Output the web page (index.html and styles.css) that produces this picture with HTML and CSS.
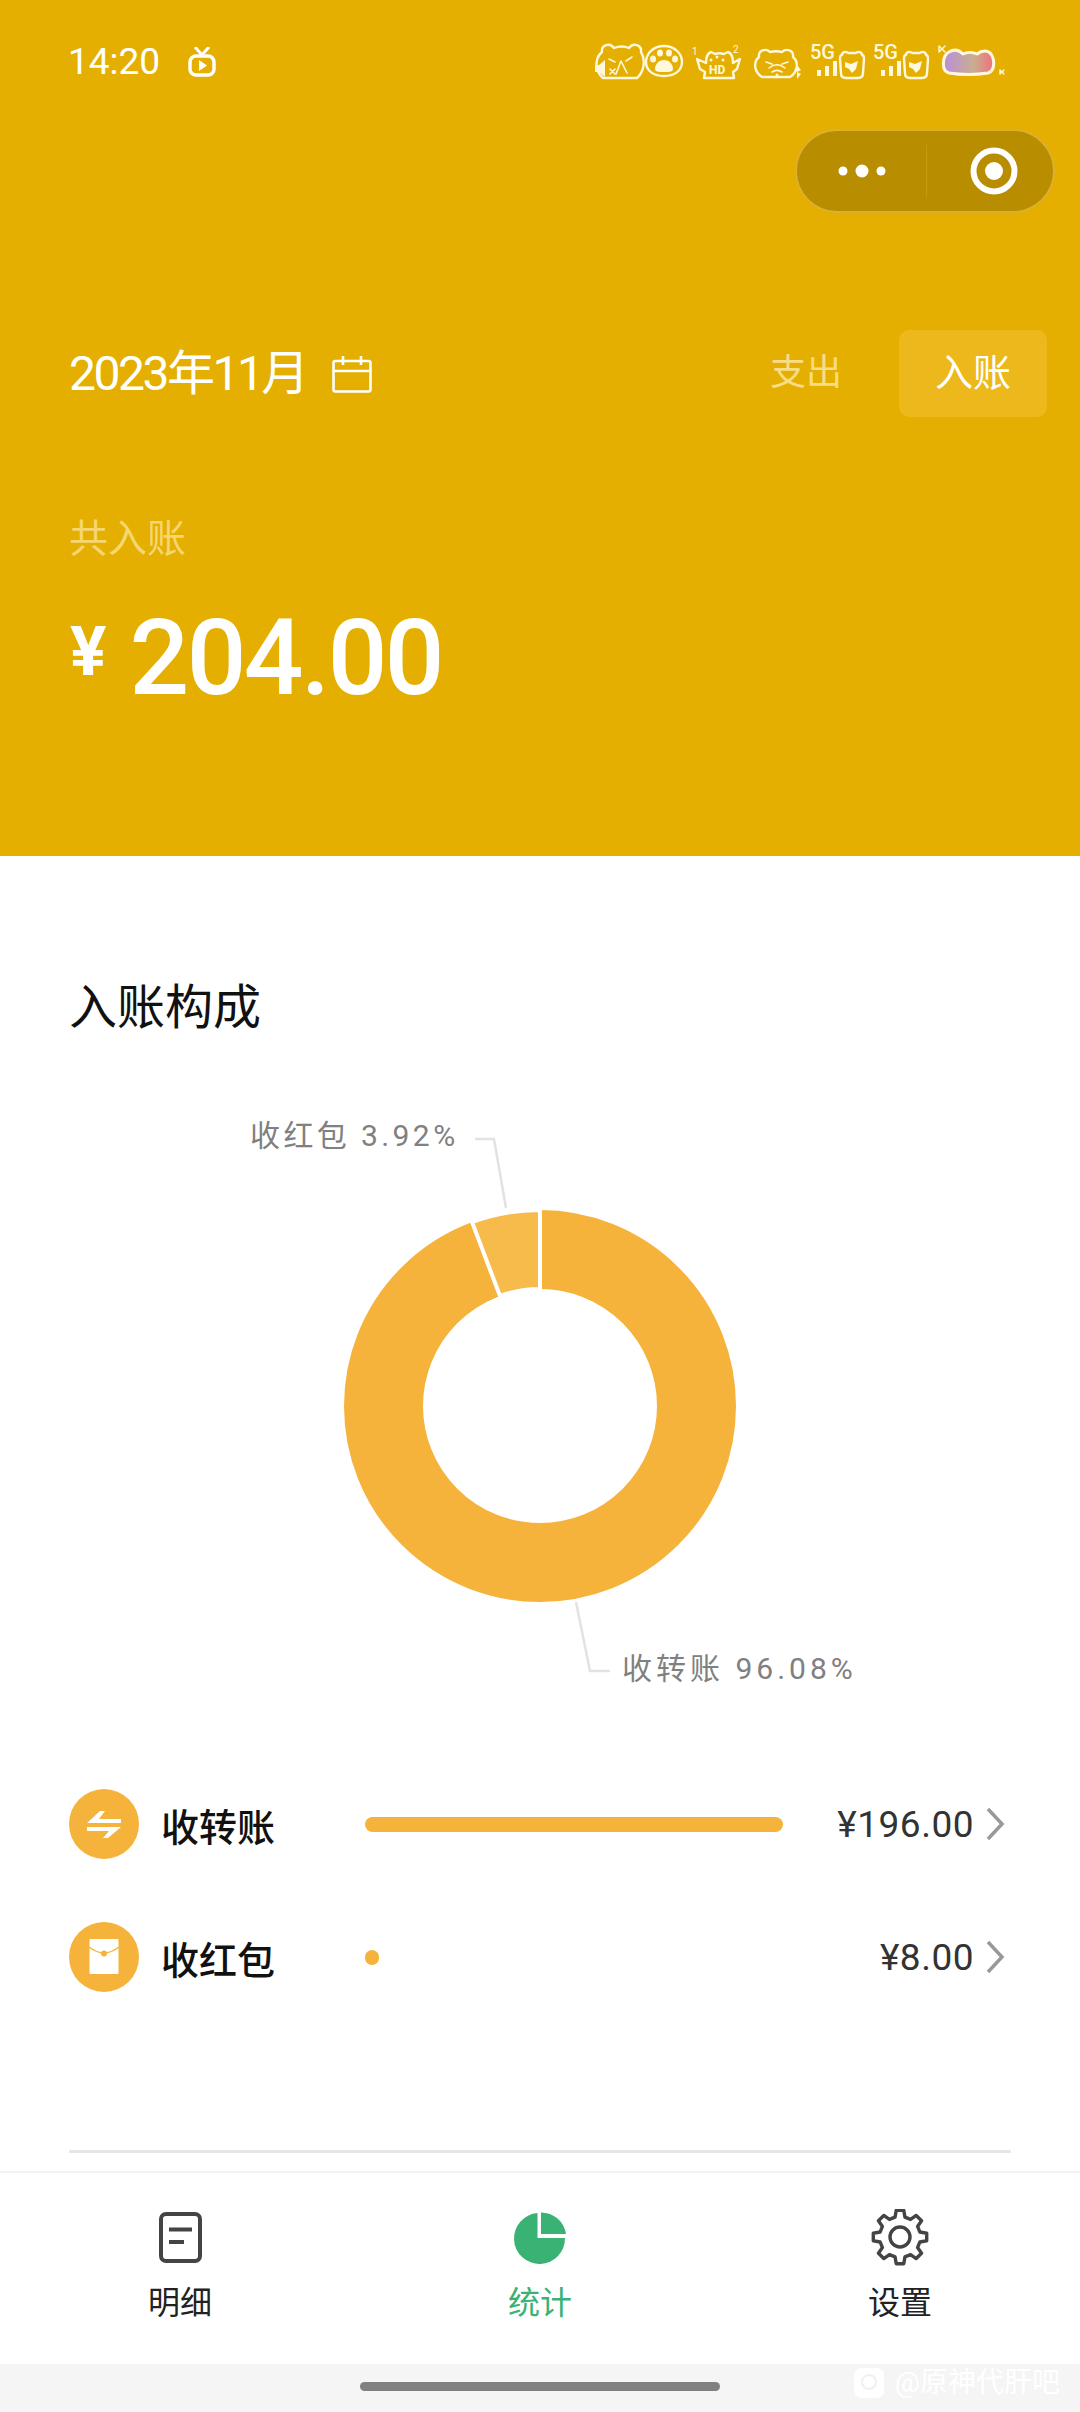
FILE: index.html
```html
<!DOCTYPE html>
<html lang="zh-CN">
<head>
  <meta charset="UTF-8" />
  <meta name="viewport" content="width=device-width, initial-scale=1.0"/>
  <title>入账统计</title>
  <link rel="stylesheet" href="styles.css">
</head>
<body>

<div class="page">
  <header class="header">
    <div class="status-bar">
      <div class="status-left">
        <span class="time">14:20</span>
        <svg class="tv-icon" width="30" height="30" viewBox="0 0 30 30">
          <path d="M8 0l7 8 7-8" fill="none" stroke="#fff" stroke-width="3"/>
          <rect x="3" y="9" width="24" height="19" rx="6" fill="none" stroke="#fff" stroke-width="3.500"/>
          <path d="M12 13l8 5.500-8 5.500z" fill="#fff"/>
        </svg>
      </div>
      <div class="status-right">
        <svg width="410" height="40" viewBox="595 44 410 40" fill="none" stroke="#fff8dd" stroke-width="2.400" stroke-linecap="round" stroke-linejoin="round">
          <!-- bear, mute -->
          <path d="M603 79c-9-8-8-20-1-26-1-7 8-10 12-4 5-2 10-2 15 0 4-6 13-3 12 4 5 8 3 20-4 26z"/>
          <path d="M609 60l6 3M632 58l-6 4M621 62l-5 13M621 62l6 12M610 70l5 5M615 70l-5 5" stroke-width="1.600"/>
          <path d="M595 66h4l6-5v17l-6-5h-4z" fill="#fff8dd" stroke="none"/>
          <!-- paw -->
          <path d="M664 47c10 0 18 7 18 16s-8 14-18 14-18-5-18-14 8-16 18-16z"/>
          <path d="M664 61c5 0 9 4 9 9 0 3-4 3-9 3s-9 0-9-3c0-5 4-9 9-9z" fill="#fff8dd" stroke="none"/>
          <ellipse cx="653" cy="60" rx="3" ry="3.500" fill="#fff8dd" stroke="none"/>
          <ellipse cx="660" cy="54" rx="3" ry="3.500" fill="#fff8dd" stroke="none"/>
          <ellipse cx="669" cy="54" rx="3" ry="3.500" fill="#fff8dd" stroke="none"/>
          <ellipse cx="675" cy="60" rx="3" ry="3.500" fill="#fff8dd" stroke="none"/>
          <!-- cat hd -->
          <path d="M697 60l9 4c0-6 2-10 5-11l4 2c3-1 6-1 9 0l4-2c3 1 5 5 5 11l7-4-3 10-4 3 1 6h-30l1-6-5-3z"/>
          <circle cx="711" cy="61" r="1.500" fill="#fff8dd" stroke="none"/>
          <circle cx="717" cy="58" r="1.500" fill="#fff8dd" stroke="none"/>
          <circle cx="723" cy="61" r="1.500" fill="#fff8dd" stroke="none"/>
          <text class="hd" x="709" y="75">HD</text>
          <text class="sim" x="692" y="56">1</text>
          <text class="sim" x="733" y="54">2</text>
          <!-- bear wifi -->
          <path d="M762 78c-8-5-9-15-3-20-1-7 7-9 11-5 4-1 8-1 12 0 4-4 12-2 11 5 6 5 5 15-3 20z"/>
          <path d="M766 63l6 2M788 63l-6 2M769 69c5-4 11-4 16 0M772 73c3-2 7-2 10 0" stroke-width="1.600"/>
          <circle cx="777" cy="76" r="1.500" fill="#fff8dd" stroke="none"/>
          <path d="M797 66l4 5-4 2 4 2-4 5z" fill="#fff8dd" stroke="none"/>
          <!-- hamsters -->
          <path d="M842 56c0-3 4-4 6-2h8c2-2 6-1 6 2 2 0 2 2 2 4l-1 14c0 3-2 5-5 5h-12c-3 0-5-2-5-5l-1-14c0-2 0-4 2-4z"/>
          <path d="M845 63l6 2 7-3-2 8-4 4-3-4-4-2z" fill="#fff8dd" stroke="none"/>
          <path d="M906 56c0-3 4-4 6-2h8c2-2 6-1 6 2 2 0 2 2 2 4l-1 14c0 3-2 5-5 5h-12c-3 0-5-2-5-5l-1-14c0-2 0-4 2-4z"/>
          <path d="M909 63l6 2 7-3-2 8-4 4-3-4-4-2z" fill="#fff8dd" stroke="none"/>
          <!-- signal bars -->
          <path d="M819 77v-6M827 77v-10M835 77v-15M883 77v-6M891 77v-10M899 77v-15" stroke-width="4" stroke-linecap="butt"/>
          <!-- battery cloud -->
          <defs>
            <linearGradient id="cloudFill">
              <stop offset="0" stop-color="#b98fdc"/>
              <stop offset="0.6" stop-color="#c9ad8f"/>
              <stop offset="1" stop-color="#f0707c"/>
            </linearGradient>
          </defs>
          <path d="M949 74c-8-2-7-17 0-21 5-3 10-2 14 2 4-2 10-2 14 0 5-4 11-4 14 0 4 6 4 17-3 19-13 2-26 2-39 0z" fill="url(#cloudFill)" stroke-width="3"/>
          <path d="M939 47l3 3 3-3-3 3 3 3-3-3-3 3zM1000 71l2 2 2-2-2 2 2 2-2-2-2 2z" stroke-width="1.400"/>
        </svg>
        <span class="net net-one">5G</span>
        <span class="net net-two">5G</span>
      </div>
    </div>

    <div class="capsule">
      <div class="capsule-side">
        <svg width="50" height="14" viewBox="0 0 50 14">
          <circle cx="6" cy="7" r="4.500" fill="#fff"/>
          <circle cx="25" cy="7" r="6.500" fill="#fff"/>
          <circle cx="44" cy="7" r="4.500" fill="#fff"/>
        </svg>
      </div>
      <div class="capsule-side capsule-right">
        <svg width="48" height="48" viewBox="0 0 48 48">
          <circle cx="24" cy="24" r="20.500" fill="none" stroke="#fff" stroke-width="6"/>
          <circle cx="24" cy="24" r="9" fill="#fff"/>
        </svg>
      </div>
    </div>

    <div class="date-row">
      <div class="date-pick">
        <span class="date-text">2023年11月</span>
        <svg width="40" height="38" viewBox="0 0 40 38" fill="none" stroke="#fff" stroke-width="2.600">
          <rect x="1.500" y="6" width="37" height="30.500" rx="2"/>
          <path d="M1.500 16h37M11 1v9M29 1v9"/>
        </svg>
      </div>
      <div class="type-switch">
        <span class="type-item">支出</span>
        <span class="type-item type-active">入账</span>
      </div>
    </div>

    <div class="total-label">共入账</div>
    <div class="total-amount"><span class="yen">¥</span><span class="amount-num">204.00</span></div>
  </header>

  <main class="content">
    <h2 class="section-title">入账构成</h2>

    <div class="chart">
      <svg width="1080" height="630" viewBox="0 1090 1080 630">
        <path d="M475 1139H494L506 1208M576 1602L590 1671H610" fill="none" stroke="#e0e2e6" stroke-width="2.500"/>
        <circle cx="540" cy="1406" r="156.500" fill="#fff" stroke="#f5b33b" stroke-width="79"/>
        <path d="M540 1210A196 196 0 0 0 472 1222L500 1296A117 117 0 0 1 540 1289Z" fill="#f6bb4b" stroke="#fff" stroke-width="4"/>
        <path d="M540 1208V1291" stroke="#fff" stroke-width="4"/>
      </svg>
      <span class="chart-label label-red">收红包 3.92%</span>
      <span class="chart-label label-transfer">收转账 96.08%</span>
    </div>

    <div class="rows">
      <div class="row">
        <svg class="row-icon" width="70" height="70" viewBox="0 0 70 70">
          <circle cx="35" cy="35" r="35" fill="#f5b33b"/>
          <path d="M18 34L31 22h5l-6 8h22v4zM52 38L39 49h-5l6-7H18v-4z" fill="#fff"/>
        </svg>
        <span class="row-name">收转账</span>
        <div class="bar-track"><div class="bar" style="width: 418px"></div></div>
        <span class="row-amount">¥196.00</span>
        <svg class="chevron" width="20" height="34" viewBox="0 0 20 34">
          <path d="M3 2l14 15L3 32" fill="none" stroke="#999" stroke-width="3.500"/>
        </svg>
      </div>
      <div class="row">
        <svg class="row-icon" width="70" height="70" viewBox="0 0 70 70">
          <circle cx="35" cy="35" r="35" fill="#f5b33b"/>
          <rect x="20.500" y="17" width="29" height="35" rx="1" fill="#fff"/>
          <path d="M20 25Q28 31 35 31Q42 31 50 25" fill="none" stroke="#f5b33b" stroke-width="1.500"/>
          <circle cx="35" cy="31.500" r="3" fill="#f5b33b"/>
        </svg>
        <span class="row-name">收红包</span>
        <div class="bar-track"><div class="bar" style="width: 14px"></div></div>
        <span class="row-amount">¥8.00</span>
        <svg class="chevron" width="20" height="34" viewBox="0 0 20 34">
          <path d="M3 2l14 15L3 32" fill="none" stroke="#999" stroke-width="3.500"/>
        </svg>
      </div>
    </div>

    <div class="divider"></div>
  </main>

  <nav class="tab-bar">
    <div class="tab">
      <svg width="60" height="58" viewBox="0 0 60 58" fill="none" stroke="#444" stroke-width="4">
        <rect x="11" y="5" width="39" height="47" rx="5"/>
        <path d="M19 20.500h23M19 33h15"/>
      </svg>
      <span class="tab-label">明细</span>
    </div>
    <div class="tab tab-active">
      <svg width="60" height="58" viewBox="0 0 60 58">
        <path d="M27.500 4A25.500 25.500 0 1 0 55 29H27.500z" fill="#3ab273"/>
        <path d="M31 3.500A25 25 0 0 1 56 25H31z" fill="#3ab273"/>
      </svg>
      <span class="tab-label">统计</span>
    </div>
    <div class="tab">
      <svg width="60" height="58" viewBox="0 0 60 58" fill="none" stroke="#444" stroke-width="3.400" stroke-linejoin="round">
        <g transform="translate(30 28)">
          <path d="M-4.960-19.900L-3.760-26.700 3.760-26.700 4.960-19.900 10.560-17.580 16.220-21.540 21.540-16.220 17.580-10.560 19.900-4.960 26.700-3.760 26.700 3.760 19.900 4.960 17.580 10.560 21.540 16.220 16.220 21.540 10.560 17.580 4.960 19.900 3.760 26.700-3.760 26.700-4.960 19.900-10.560 17.580-16.220 21.540-21.540 16.220-17.580 10.560-19.900 4.960-26.700 3.760-26.700-3.760-19.900-4.960-17.580-10.560-21.540-16.220-16.220-21.540-10.560-17.580Z"/>
          <circle r="10"/>
        </g>
      </svg>
      <span class="tab-label">设置</span>
    </div>
  </nav>

  <div class="home-area">
    <div class="home-handle"></div>
    <div class="watermark">
      <svg width="30" height="30" viewBox="0 0 30 30">
        <rect width="30" height="30" rx="7" fill="#fff"/>
        <circle cx="15" cy="14" r="7" fill="none" stroke="#f0f0f0" stroke-width="2"/>
      </svg>
      <span>@原神代肝吧</span>
    </div>
  </div>
</div>

</body>
</html>
```
FILE: styles.css
```css
* {
  box-sizing: border-box;
}

body {
  margin: 0;
  background: #fff;
  font-family: Roboto, "Noto Sans CJK SC", sans-serif;
}

.page {
  width: 1080px;
  height: 2412px;
  overflow: hidden;
}

/* yellow top part */
.header {
  height: 856px;
  background: #e4af00;
  color: #fff;
}

.status-bar {
  height: 124px;
  display: flex;
  justify-content: space-between;
  align-items: center;
  padding-left: 68px;
  position: relative;
}

.status-left {
  display: flex;
  align-items: center;
  gap: 27px;
}

.time {
  font-size: 37px;
  line-height: 44px;
}

.status-right {
  margin-right: 75px;
  height: 40px;
  margin-top: 2px;
  position: relative;
}

.status-right svg {
  display: block;
}

.hd {
  font-family: Roboto, sans-serif;
  font-size: 12px;
  font-weight: 700;
  fill: #fff8dd;
  stroke: none;
}

.sim {
  font-family: Roboto, sans-serif;
  font-size: 10px;
  fill: #fff8dd;
  stroke: none;
}

.net {
  position: absolute;
  top: -3px;
  font-size: 20px;
  font-weight: 500;
  line-height: 24px;
  color: #fff8dd;
}

.net-one {
  left: 215px;
}

.net-two {
  left: 278px;
}

.capsule {
  width: 260px;
  height: 84px;
  margin: 5px 25px 0 auto;
  display: flex;
  background: #b88d00;
  border: 2px solid #dcb02c;
  border-radius: 42px;
}

.capsule-side {
  width: 129px;
  display: flex;
  align-items: center;
  justify-content: center;
}

.capsule-right {
  width: 127px;
  padding-left: 8px;
  position: relative;
}

.capsule-right::before {
  content: "";
  position: absolute;
  left: 0;
  top: 14px;
  bottom: 14px;
  width: 1px;
  background: #c79b10;
}

.date-row {
  display: flex;
  justify-content: space-between;
  align-items: center;
  margin-top: 117px;
  padding: 0 33px 0 69px;
}

.date-pick {
  display: flex;
  align-items: center;
  gap: 25px;
}

.date-text {
  font-size: 48px;
  letter-spacing: -2.500px;
  line-height: 60px;
}

.type-switch {
  display: flex;
  align-items: center;
  gap: 57px;
}

.type-item {
  font-size: 36px;
  line-height: 87px;
  color: #f8dd85;
}

.type-active {
  width: 148px;
  text-align: center;
  font-size: 38px;
  color: #fff;
  background: #edb81b;
  border-radius: 10px;
}

.total-label {
  margin-top: 97px;
  padding-left: 69px;
  font-size: 39px;
  line-height: 50px;
  color: #f5d672;
}

.total-amount {
  margin-top: 45px;
  padding-left: 70px;
  display: flex;
  align-items: center;
  height: 100px;
}

.yen {
  font-size: 68px;
  font-weight: 700;
  margin-right: 23px;
  margin-top: -14px;
}

.amount-num {
  font-size: 105px;
  font-weight: 500;
  letter-spacing: -2.500px;
  line-height: 100px;
}

/* white part */
.section-title {
  margin: 0;
  padding: 122px 0 0 69px;
  font-size: 48px;
  font-weight: 400;
  line-height: 60px;
  color: #111;
}

.chart {
  position: relative;
  height: 630px;
  margin-top: 52px;
}

.chart svg {
  display: block;
}

.chart-label {
  position: absolute;
  font-size: 30px;
  line-height: 40px;
  letter-spacing: 3.400px;
  color: #808080;
  white-space: nowrap;
}

.label-red {
  left: 250px;
  top: 26px;
}

.label-transfer {
  left: 622px;
  top: 559px;
  letter-spacing: 4px;
}

.rows {
  margin-top: 69px;
  display: flex;
  flex-direction: column;
  gap: 63px;
  padding: 0 75px 0 69px;
}

.row {
  display: flex;
  align-items: center;
  height: 70px;
}

.row-icon {
  flex: none;
}

.row-name {
  width: 226px;
  padding-left: 22px;
  font-size: 38px;
  font-weight: 500;
  color: #111;
}

.bar-track {
  width: 418px;
}

.bar {
  height: 15px;
  background: #f5b33b;
  border-radius: 7.500px;
}

.row-amount {
  flex: 1;
  text-align: right;
  font-size: 37px;
  letter-spacing: 0.500px;
  color: #333;
}

.chevron {
  flex: none;
  margin-left: 11px;
}

.divider {
  height: 3px;
  margin: 158px 69px 0;
  background: #e6e6e6;
}

.tab-bar {
  height: 193px;
  margin-top: 18px;
  border-top: 2px solid #f3f3f3;
  display: flex;
  padding-top: 36px;
}

.tab {
  flex: 1;
  display: flex;
  flex-direction: column;
  align-items: center;
  gap: 16px;
  color: #222;
}

.tab-active {
  color: #3ab273;
}

.tab-label {
  font-size: 32px;
  line-height: 40px;
}

.home-area {
  height: 48px;
  background: #f5f5f5;
  position: relative;
  display: flex;
  justify-content: center;
  padding-top: 18px;
}

.home-handle {
  width: 360px;
  height: 9px;
  border-radius: 5px;
  background: #808080;
}

.watermark {
  position: absolute;
  right: 20px;
  top: 4px;
  display: flex;
  align-items: center;
  gap: 11px;
  font-size: 28px;
  line-height: 30px;
  color: #fff;
}
```
